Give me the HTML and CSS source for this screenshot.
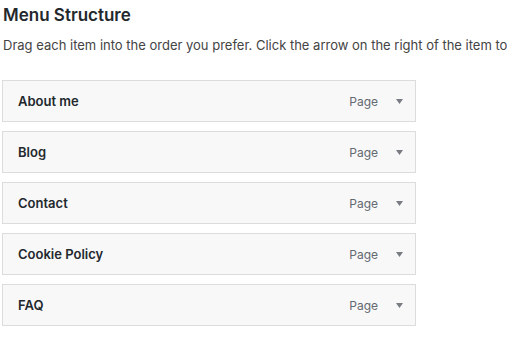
FILE: index.html
```html
<!DOCTYPE html>
<html lang="en">
<head>
    <meta charset="UTF-8">
    <title>Menu Structure</title>
    <link rel="stylesheet" href="styles.css">
</head>
<body>
    <div class="menu-edit">
        <h3 class="menu-title">Menu Structure</h3>
        <p class="menu-hint">Drag each item into the order you prefer. Click the arrow on the right of the item to reveal additional configuration options.</p>

        <ul class="menu-list">
            <li class="menu-item">
                <span class="item-title">About me</span>
                <span class="item-type">Page</span>
                <span class="item-edit"><svg width="7" height="5" viewBox="0 0 7 5"><polygon points="0,0 7,0 3.5,5" fill="#787c82"/></svg></span>
            </li>
            <li class="menu-item">
                <span class="item-title">Blog</span>
                <span class="item-type">Page</span>
                <span class="item-edit"><svg width="7" height="5" viewBox="0 0 7 5"><polygon points="0,0 7,0 3.5,5" fill="#787c82"/></svg></span>
            </li>
            <li class="menu-item">
                <span class="item-title">Contact</span>
                <span class="item-type">Page</span>
                <span class="item-edit"><svg width="7" height="5" viewBox="0 0 7 5"><polygon points="0,0 7,0 3.5,5" fill="#787c82"/></svg></span>
            </li>
            <li class="menu-item">
                <span class="item-title">Cookie Policy</span>
                <span class="item-type">Page</span>
                <span class="item-edit"><svg width="7" height="5" viewBox="0 0 7 5"><polygon points="0,0 7,0 3.5,5" fill="#787c82"/></svg></span>
            </li>
            <li class="menu-item">
                <span class="item-title">FAQ</span>
                <span class="item-type">Page</span>
                <span class="item-edit"><svg width="7" height="5" viewBox="0 0 7 5"><polygon points="0,0 7,0 3.5,5" fill="#787c82"/></svg></span>
            </li>
        </ul>
    </div>
</body>
</html>
```

FILE: styles.css
```css
* {
    margin: 0;
    padding: 0;
    box-sizing: border-box;
}

body {
    font-family: 'Inter', 'Noto Sans', sans-serif;
    background: #ffffff;
    color: #23282d;
    overflow: hidden;
}

.menu-edit {
    padding: 4px 0 0 2px;
    white-space: nowrap;
}

.menu-title {
    font-size: 17px;
    font-weight: 600;
    line-height: 22px;
    margin-left: 1px;
    color: #23282d;
}

.menu-hint {
    font-size: 13px;
    line-height: 20px;
    color: #444444;
    margin: 9px 0 0 1px;
}

.menu-list {
    list-style: none;
    margin-top: 25px;
    width: 414px;
}

.menu-item {
    display: flex;
    align-items: center;
    height: 42px;
    padding: 0 12px 0 15px;
    margin-bottom: 9px;
    background: #f8f8f8;
    border: 1px solid #dcdcde;
}

.item-title {
    flex: 1;
    font-size: 13px;
    font-weight: 600;
    color: #23282d;
}

.item-type {
    font-size: 12px;
    color: #646970;
}

.item-edit {
    display: flex;
    margin-left: 18px;
}
```
